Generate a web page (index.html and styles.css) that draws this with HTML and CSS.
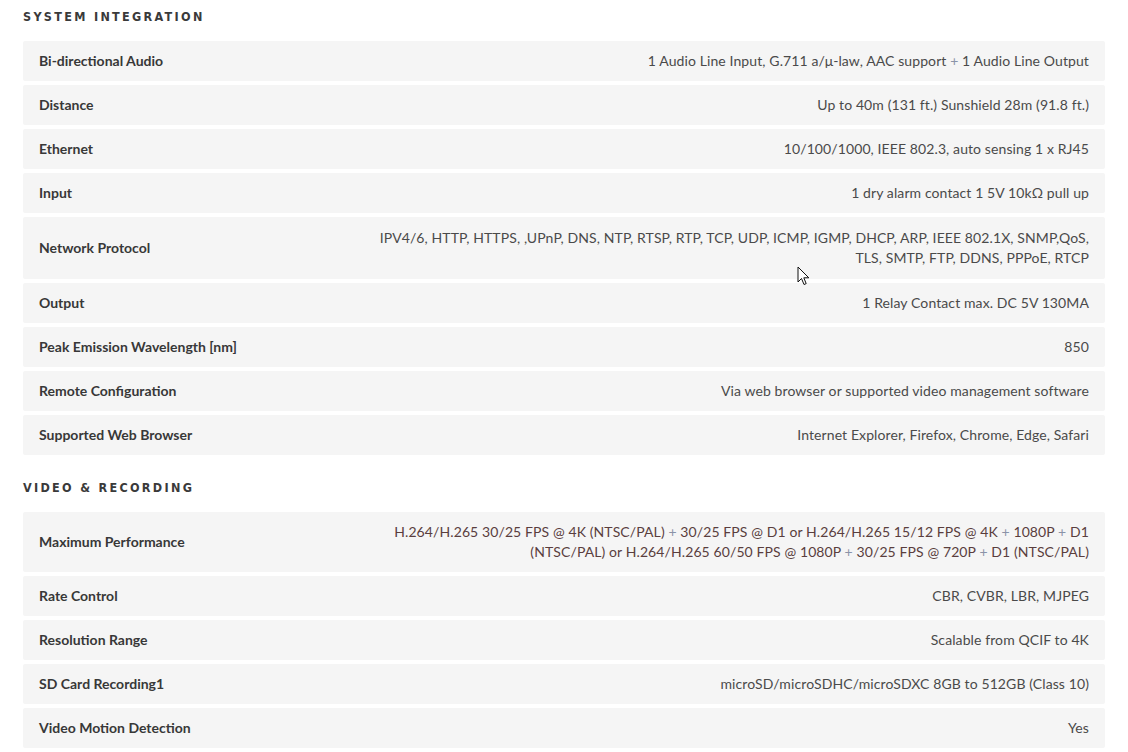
FILE: index.html
```html
<!DOCTYPE html>
<html lang="en">
<head>
<meta charset="utf-8">
<title>Specifications</title>
<link rel="stylesheet" href="styles.css">
</head>
<body>
<div class="page">
  <section class="section">
    <h2 class="section-title">SYSTEM INTEGRATION</h2>
    <div class="row"><div class="label">Bi-directional Audio</div><div class="value">1 Audio Line Input, G.711 a/μ-law, AAC support <span class="plus">+</span> 1 Audio Line Output</div></div>
    <div class="row"><div class="label">Distance</div><div class="value">Up to 40m (131 ft.) Sunshield 28m (91.8 ft.)</div></div>
    <div class="row"><div class="label">Ethernet</div><div class="value">10/100/1000, IEEE 802.3, auto sensing 1 x RJ45</div></div>
    <div class="row"><div class="label">Input</div><div class="value">1 dry alarm contact 1 5V 10kΩ pull up</div></div>
    <div class="row tall"><div class="label">Network Protocol</div><div class="value">IPV4/6, HTTP, HTTPS, ,UPnP, DNS, NTP, RTSP, RTP, TCP, UDP, ICMP, IGMP, DHCP, ARP, IEEE 802.1X, SNMP,QoS,<br>TLS, SMTP, FTP, DDNS, PPPoE, RTCP</div></div>
    <div class="row"><div class="label">Output</div><div class="value">1 Relay Contact max. DC 5V 130MA</div></div>
    <div class="row"><div class="label">Peak Emission Wavelength [nm]</div><div class="value">850</div></div>
    <div class="row"><div class="label">Remote Configuration</div><div class="value">Via web browser or supported video management software</div></div>
    <div class="row"><div class="label">Supported Web Browser</div><div class="value">Internet Explorer, Firefox, Chrome, Edge, Safari</div></div>
  </section>
  <section class="section">
    <h2 class="section-title">VIDEO &amp; RECORDING</h2>
    <div class="row"><div class="label">Maximum Performance</div><div class="value perf">H.264/H.265 30/25 FPS @ 4K (NTSC/PAL) <span class="plus">+</span> 30/25 FPS @ D1 or H.264/H.265 15/12 FPS @ 4K <span class="plus">+</span> 1080P <span class="plus">+</span> D1<br>(NTSC/PAL) or H.264/H.265 60/50 FPS @ 1080P <span class="plus">+</span> 30/25 FPS @ 720P <span class="plus">+</span> D1 (NTSC/PAL)</div></div>
    <div class="row"><div class="label">Rate Control</div><div class="value">CBR, CVBR, LBR, MJPEG</div></div>
    <div class="row"><div class="label">Resolution Range</div><div class="value">Scalable from QCIF to 4K</div></div>
    <div class="row"><div class="label">SD Card Recording1</div><div class="value">microSD/microSDHC/microSDXC 8GB to 512GB (Class 10)</div></div>
    <div class="row"><div class="label">Video Motion Detection</div><div class="value">Yes</div></div>
  </section>
</div>
<svg class="cursor" width="14" height="22" viewBox="0 0 14 22" xmlns="http://www.w3.org/2000/svg">
  <path d="M1 1 L1 16 L4.5 12.5 L7 18.5 L9.2 17.6 L6.8 11.8 L11.8 11.8 Z" fill="#fff" stroke="#111" stroke-width="1" stroke-linejoin="round"/>
</svg>
</body>
</html>
```

FILE: styles.css
```css
html, body {
  margin: 0;
  padding: 0;
  background: #ffffff;
}

body {
  font-family: "Lato", "Noto Sans", "Liberation Sans", sans-serif;
  font-size: 14px;
  color: #333333;
}

.page {
  padding: 7px 23px 0 23px;
  width: 1082px;
}

.section {
  margin-bottom: 23px;
}

.section-title {
  margin: 0 0 14px 0;
  font-family: "DejaVu Sans Condensed", "DejaVu Sans", "Liberation Sans", sans-serif;
  font-stretch: condensed;
  font-weight: 700;
  font-size: 12.5px;
  line-height: 20px;
  letter-spacing: 2.3px;
  color: #3a3a3a;
}

.row {
  display: flex;
  justify-content: space-between;
  align-items: center;
  background: #f5f5f5;
  border-radius: 2px;
  padding: 10px 16px;
  margin-bottom: 4px;
  line-height: 20px;
}

.row.tall {
  padding: 11px 16px;
}

.label {
  flex: 0 0 auto;
  font-weight: 700;
  color: #383838;
}

.value {
  max-width: 730px;
  text-align: right;
  color: #4a4a4a;
  letter-spacing: 0.1px;
}

.perf {
  color: #5a3e3e;
}

.plus {
  color: #8a93a8;
}

.cursor {
  position: absolute;
  left: 797px;
  top: 266px;
}
```
